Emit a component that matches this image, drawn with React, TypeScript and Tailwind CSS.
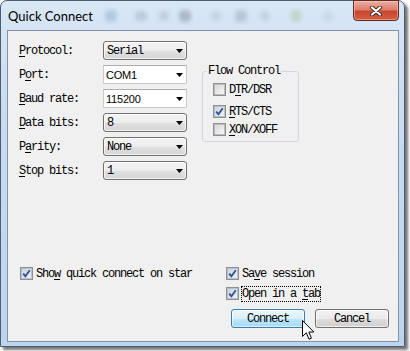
import React from "react";

const mono = "font-['Liberation_Mono',monospace] text-[12px] tracking-[-1.2px] text-black leading-[14px]";

function Mn({ text, at }: { text: string; at: number }) {
  if (at < 0) return <>{text}</>;
  return (
    <>
      {text.slice(0, at)}
      <span className="underline underline-offset-[2px]">{text[at]}</span>
      {text.slice(at + 1)}
    </>
  );
}

function Arrow() {
  return (
    <svg width="7" height="4" viewBox="0 0 7 4" className="shrink-0">
      <path d="M0 0 H7 L3.5 4 Z" fill="#000" />
    </svg>
  );
}

function DropList({ value }: { value: string }) {
  return (
    <div className="flex h-[19px] w-[84px] items-center justify-between rounded-[3px] border border-[#707070] bg-[linear-gradient(#f4f4f4_0%,#ececec_50%,#e0e0e0_51%,#d6d6d6_100%)] pl-[3px] pr-[3px] shadow-[inset_0_0_0_1px_rgba(255,255,255,0.7)]">
      <span className={mono}>{value}</span>
      <Arrow />
    </div>
  );
}

function EditCombo({ value }: { value: string }) {
  return (
    <div className="flex h-[19px] w-[84px] items-center justify-between border border-[#c8ccd2] border-t-[#abadb3] bg-white pl-[2px] pr-[3px]">
      <span className="font-['Liberation_Sans',sans-serif] text-[11px] tracking-[-0.2px] leading-[14px] text-black">
        {value}
      </span>
      <Arrow />
    </div>
  );
}

function CheckBox({ checked }: { checked: boolean }) {
  return (
    <div className="flex h-[13px] w-[13px] shrink-0 items-center justify-center border border-[#8f8f8f] bg-[#f4f4f4]">
      <div
        className={
          checked
            ? "relative h-[11px] w-[11px] border border-[#b7c2cf] bg-[linear-gradient(135deg,#c9d3df,#eef2f7)]"
            : "h-[11px] w-[11px] border border-[#b9bcc0] bg-[linear-gradient(135deg,#d6d6d6,#f7f7f7)]"
        }
      >
        {checked && (
          <svg width="9" height="9" viewBox="0 0 9 9" className="absolute left-0 top-0">
            <path d="M1.2 4.6 L3.4 7.2 L7.8 1.2" fill="none" stroke="#2d4f96" strokeWidth="1.8" />
          </svg>
        )}
      </div>
    </div>
  );
}

function CheckRow({
  label,
  at,
  checked,
  focused = false,
}: {
  label: string;
  at: number;
  checked: boolean;
  focused?: boolean;
}) {
  return (
    <div className="flex h-[13px] items-center">
      <CheckBox checked={checked} />
      <span
        className={`ml-[2px] border border-dotted ${mono} ${
          focused ? "border-black" : "border-transparent"
        }`}
      >
        <Mn text={label} at={at} />
      </span>
    </div>
  );
}

const rows: { label: string; at: number; value: string; edit: boolean }[] = [
  { label: "Protocol:", at: 0, value: "Serial", edit: false },
  { label: "Port:", at: 1, value: "COM1", edit: true },
  { label: "Baud rate:", at: 0, value: "115200", edit: true },
  { label: "Data bits:", at: 0, value: "8", edit: false },
  { label: "Parity:", at: 1, value: "None", edit: false },
  { label: "Stop bits:", at: 0, value: "1", edit: false },
];

const blobs = [
  { ml: "ml-[12px]", c: "bg-[#7f9fc2]", s: "h-[12px] w-[12px]" },
  { ml: "ml-[18px]", c: "bg-[#98a4b0]", s: "h-[10px] w-[12px]" },
  { ml: "ml-[12px]", c: "bg-[#a2acb6]", s: "h-[10px] w-[10px]" },
  { ml: "ml-[10px]", c: "bg-[#6e7883]", s: "h-[12px] w-[12px]" },
  { ml: "ml-[20px]", c: "bg-[#b2bcc6]", s: "h-[10px] w-[10px]" },
  { ml: "ml-[14px]", c: "bg-[#8f9aa5]", s: "h-[12px] w-[12px]" },
  { ml: "ml-[14px]", c: "bg-[#a6b0ba]", s: "h-[10px] w-[8px]" },
  { ml: "ml-[22px]", c: "bg-[#9fbf7f]", s: "h-[12px] w-[10px]" },
  { ml: "ml-[22px]", c: "bg-[#b8c2cc]", s: "h-[10px] w-[10px]" },
];

export default function App() {
  return (
    <div className="relative h-[351px] w-[410px] overflow-hidden bg-white">
      <div className="flex h-[347px] w-[405px] flex-col rounded-t-[7px] border border-[#4e5d6e] bg-[linear-gradient(#d9e7f6_0%,#c9dcf0_30%,#bdd4ee_100%)] shadow-[3px_3px_3px_rgba(0,0,0,0.55)]">
        {/* Title bar */}
        <div className="flex h-[29px] shrink-0 items-start">
          <div className="flex h-[29px] items-center pl-[7px]">
            <span className="font-['Lato',sans-serif] text-[13px] leading-[18px] text-black">
              Quick Connect
            </span>
            <div className="flex items-center opacity-40">
              {blobs.map((b, i) => (
                <div key={i} className={`${b.ml} ${b.c} ${b.s} rounded-[4px] blur-[2px]`} />
              ))}
            </div>
          </div>
          <div className="ml-auto mr-[5px] -mt-px flex h-[21px] w-[46px] items-center justify-center rounded-b-[4px] border border-[#5f2b22] bg-[linear-gradient(#eab0a2_0%,#de7f6b_45%,#c8472f_55%,#d35f42_100%)] shadow-[inset_0_0_0_1px_rgba(255,220,210,0.45)]">
            <svg width="12" height="10" viewBox="0 0 12 10">
              <path d="M2 1.5 L10 8.5 M10 1.5 L2 8.5" stroke="#3b2a28" strokeWidth="4" strokeLinecap="round" />
              <path d="M2 1.5 L10 8.5 M10 1.5 L2 8.5" stroke="#ffffff" strokeWidth="2.2" strokeLinecap="round" />
            </svg>
          </div>
        </div>

        {/* Client area */}
        <div className="ml-[6px] flex h-[312px] w-[392px] flex-col border border-[#8293a6] bg-[#f0f0f0]">
          <div className="flex items-start pt-[10px]">
            <div className="flex flex-col gap-[5px] pl-[11px]">
              {rows.map((r) => (
                <div key={r.label} className="flex h-[19px] items-center">
                  <span className={`w-[84px] ${mono}`}>
                    <Mn text={r.label} at={r.at} />
                  </span>
                  {r.edit ? <EditCombo value={r.value} /> : <DropList value={r.value} />}
                </div>
              ))}
            </div>

            <fieldset className="ml-[15px] mt-[23px] h-[78px] w-[97px] rounded-[3px] border border-[#d0d7de] pl-[4px]">
              <legend className={`px-[1px] ${mono}`}>Flow Control</legend>
              <div className="ml-[6px] mt-[5px] flex flex-col">
                <CheckRow label="DTR/DSR" at={1} checked={false} />
                <div className="mt-[9px]">
                  <CheckRow label="RTS/CTS" at={0} checked={true} />
                </div>
                <div className="mt-[5px]">
                  <CheckRow label="XON/XOFF" at={0} checked={false} />
                </div>
              </div>
            </fieldset>
          </div>

          <div className="mt-auto flex pb-[13px]">
            <div className="w-[218px] pl-[12px]">
              <CheckRow label="Show quick connect on star" at={3} checked={true} />
            </div>
            <div className="flex flex-col">
              <CheckRow label="Save session" at={2} checked={true} />
              <div className="mt-[7px]">
                <CheckRow label="Open in a tab" at={10} checked={true} focused />
              </div>
              <div className="ml-[5px] mt-[9px] flex gap-[10px]">
                <button className={`flex h-[19px] w-[74px] items-center justify-center rounded-[3px] border border-[#3c7fb1] bg-[linear-gradient(#eaf6fd_0%,#d9f0fc_50%,#bee6fd_51%,#a7d9f5_100%)] shadow-[inset_0_0_0_1px_rgba(255,255,255,0.6)] ${mono}`}>
                  Connect
                </button>
                <button className={`flex h-[19px] w-[74px] items-center justify-center rounded-[3px] border border-[#707070] bg-[linear-gradient(#f2f2f2_0%,#ebebeb_50%,#dddddd_51%,#cfcfcf_100%)] shadow-[inset_0_0_0_1px_rgba(255,255,255,0.7)] ${mono}`}>
                  Cancel
                </button>
              </div>
            </div>
          </div>
        </div>
      </div>

      {/* mouse cursor */}
      <svg width="13" height="21" viewBox="0 0 13 21" className="absolute left-[302px] top-[320px]">
        <path
          d="M0.5 0.5 L0.5 16.5 L4.3 12.8 L7 19.2 L9.4 18.2 L6.8 12 L11.8 12 Z"
          fill="#fff"
          stroke="#000"
          strokeWidth="1"
          strokeLinejoin="round"
        />
      </svg>
    </div>
  );
}
